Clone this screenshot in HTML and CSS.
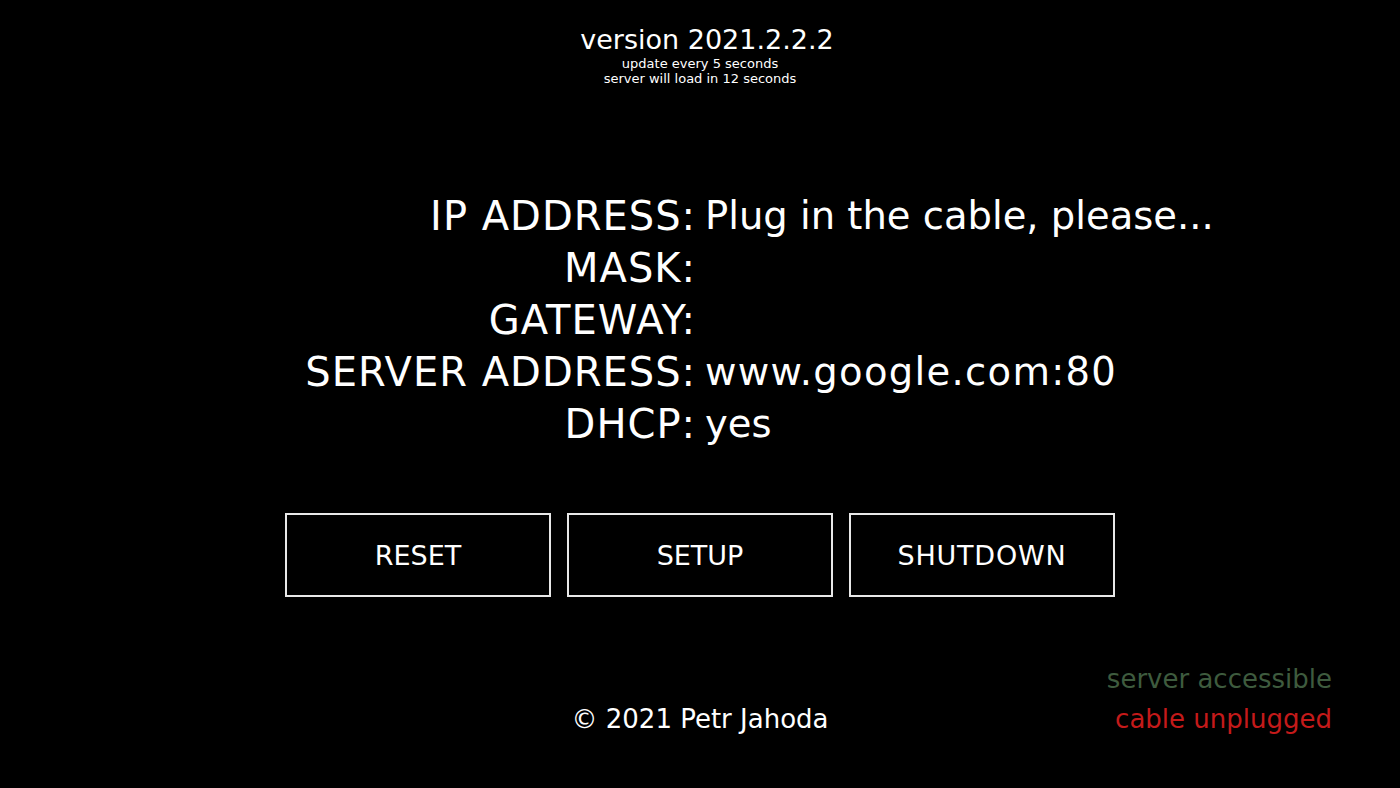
FILE: index.html
```html
<!DOCTYPE html>
<html>
<head>
<meta charset="utf-8">
<link rel="stylesheet" href="styles.css">
</head>
<body>
<div class="page">
  <header class="head">
    <div class="version">version 2021.2.2.2</div>
    <div class="sub">update every 5 seconds</div>
    <div class="sub">server will load in 12 seconds</div>
  </header>
  <section class="info">
    <div class="label">IP ADDRESS:</div><div class="value">Plug in the cable, please...</div>
    <div class="label">MASK:</div><div class="value"></div>
    <div class="label">GATEWAY:</div><div class="value"></div>
    <div class="label">SERVER ADDRESS:</div><div class="value wide">www.google.com:80</div>
    <div class="label">DHCP:</div><div class="value">yes</div>
  </section>
  <section class="buttons">
    <button class="btn">RESET</button>
    <button class="btn">SETUP</button>
    <button class="btn">SHUTDOWN</button>
  </section>
  <footer class="foot">
    <div class="foot-side"></div>
    <div class="copy">© 2021 Petr Jahoda</div>
    <div class="status">
      <div class="ok">server accessible</div>
      <div class="bad">cable unplugged</div>
    </div>
  </footer>
</div>
</body>
</html>
```
FILE: styles.css
```css
html, body {
  margin: 0;
  padding: 0;
  background: #000;
}
body {
  font-family: "DejaVu Sans", "Open Sans", sans-serif;
  color: #fff;
  width: 1400px;
  height: 788px;
  overflow: hidden;
}
.page {
  display: flex;
  flex-direction: column;
}
.head {
  text-align: center;
  padding-top: 24px;
}
.version {
  font-size: 27px;
  line-height: 32px;
  padding-left: 14px;
}
.sub {
  font-size: 13px;
  line-height: 15px;
}
.info {
  display: grid;
  grid-template-columns: 1fr 1fr;
  margin-top: 104px;
  font-size: 40px;
  line-height: 52px;
}
.label {
  text-align: right;
  padding-right: 4px;
  letter-spacing: 1px;
}
.value {
  padding-left: 5px;
  min-height: 52px;
  font-size: 38.5px;
}
.value.wide {
  letter-spacing: 1.3px;
}
.buttons {
  display: flex;
  justify-content: center;
  gap: 16px;
  margin-top: 63px;
}
.btn {
  width: 266px;
  height: 84px;
  background: #000;
  border: 2px solid #e8e8e8;
  color: #fff;
  font-family: inherit;
  font-size: 27px;
  padding: 0;
}
.btn:nth-child(3) {
  letter-spacing: 0.8px;
}
.foot {
  display: grid;
  grid-template-columns: 1fr auto 1fr;
  align-items: end;
  margin-top: 62px;
}
.copy {
  font-size: 26px;
  line-height: 40px;
  text-align: center;
}
.status {
  text-align: right;
  padding-right: 68px;
  font-size: 26px;
  line-height: 40px;
}
.ok { color: #3e5b3e; }
.bad { color: #c41a1a; }
```
